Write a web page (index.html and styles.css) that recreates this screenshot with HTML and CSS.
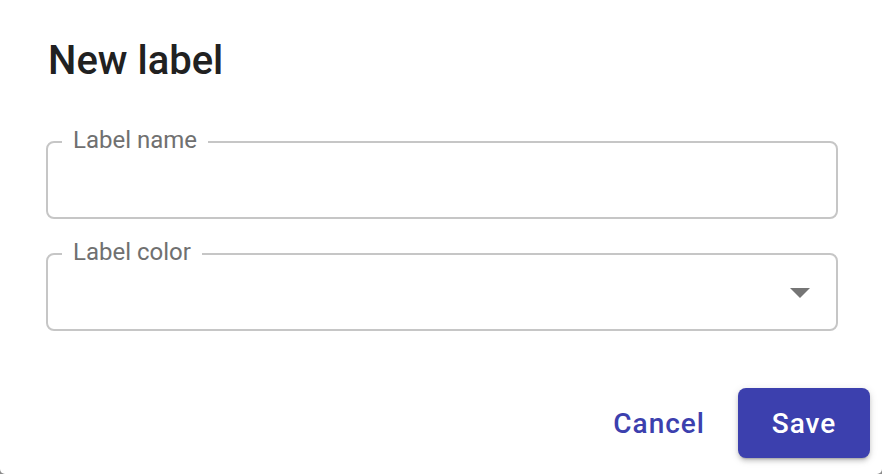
FILE: index.html
```html
<!DOCTYPE html>
<html lang="en">
<head>
<meta charset="utf-8">
<title>New label</title>
<link rel="stylesheet" href="styles.css">
</head>
<body>
<div class="dialog">
  <h1 class="title">New label</h1>
  <form class="form">
    <fieldset class="field">
      <legend class="field-label">Label name</legend>
      <div class="field-body"></div>
    </fieldset>
    <fieldset class="field field-select">
      <legend class="field-label">Label color</legend>
      <div class="field-body select-body">
        <svg class="arrow" width="20" height="10" viewBox="0 0 20 10"><path d="M0 0 L20 0 L10 10 Z" fill="#757575"/></svg>
      </div>
    </fieldset>
  </form>
  <div class="actions">
    <button class="btn btn-text" type="button">Cancel</button>
    <button class="btn btn-raised" type="button">Save</button>
  </div>
</div>
</body>
</html>
```
FILE: styles.css
```css
html, body {
  margin: 0;
  padding: 0;
}
body {
  background: #8a8a8a;
  width: 882px;
  height: 474px;
  overflow: hidden;
  font-family: Roboto, "Liberation Sans", sans-serif;
}
.dialog {
  box-sizing: border-box;
  width: 882px;
  height: 474px;
  background: #ffffff;
  border-radius: 0 0 5px 5px;
  padding: 37px 12px 0 46px;
}
.title {
  margin: 0 0 0 2px;
  font-size: 40px;
  line-height: 48px;
  font-weight: 500;
  letter-spacing: 0;
  color: #212121;
}
.form {
  margin-top: 41px;
  width: 792px;
  display: flex;
  flex-direction: column;
  gap: 19px;
}
.field {
  margin: 0;
  padding: 0;
  border: 2px solid #c6c6c6;
  border-radius: 8px;
  min-width: 0;
}
.field-label {
  margin-left: 14px;
  padding: 0 11px 4px;
  font-size: 24px;
  line-height: 28px;
  color: #707070;
}
.field-body {
  height: 59px;
}
.select-body {
  display: flex;
  justify-content: flex-end;
  align-items: flex-start;
  box-sizing: border-box;
  padding: 18px 26px 0 0;
}
.arrow {
  display: block;
}
.actions {
  margin-top: 57px;
  display: flex;
  justify-content: flex-end;
  align-items: center;
  gap: 17px;
}
.btn {
  font-family: Roboto, "Liberation Sans", sans-serif;
  font-size: 28px;
  font-weight: 500;
  letter-spacing: 1px;
  height: 70px;
  border: none;
  border-radius: 8px;
  cursor: pointer;
}
.btn-text {
  background: transparent;
  color: #3c40ae;
  padding: 0 16px;
}
.btn-raised {
  width: 132px;
  padding: 0;
  background: #3c40ae;
  color: #ffffff;
  box-shadow: 0 3px 2px -2px rgba(0,0,0,.2), 0 3px 4px 0 rgba(0,0,0,.14), 0 2px 8px 0 rgba(0,0,0,.12);
}
```
